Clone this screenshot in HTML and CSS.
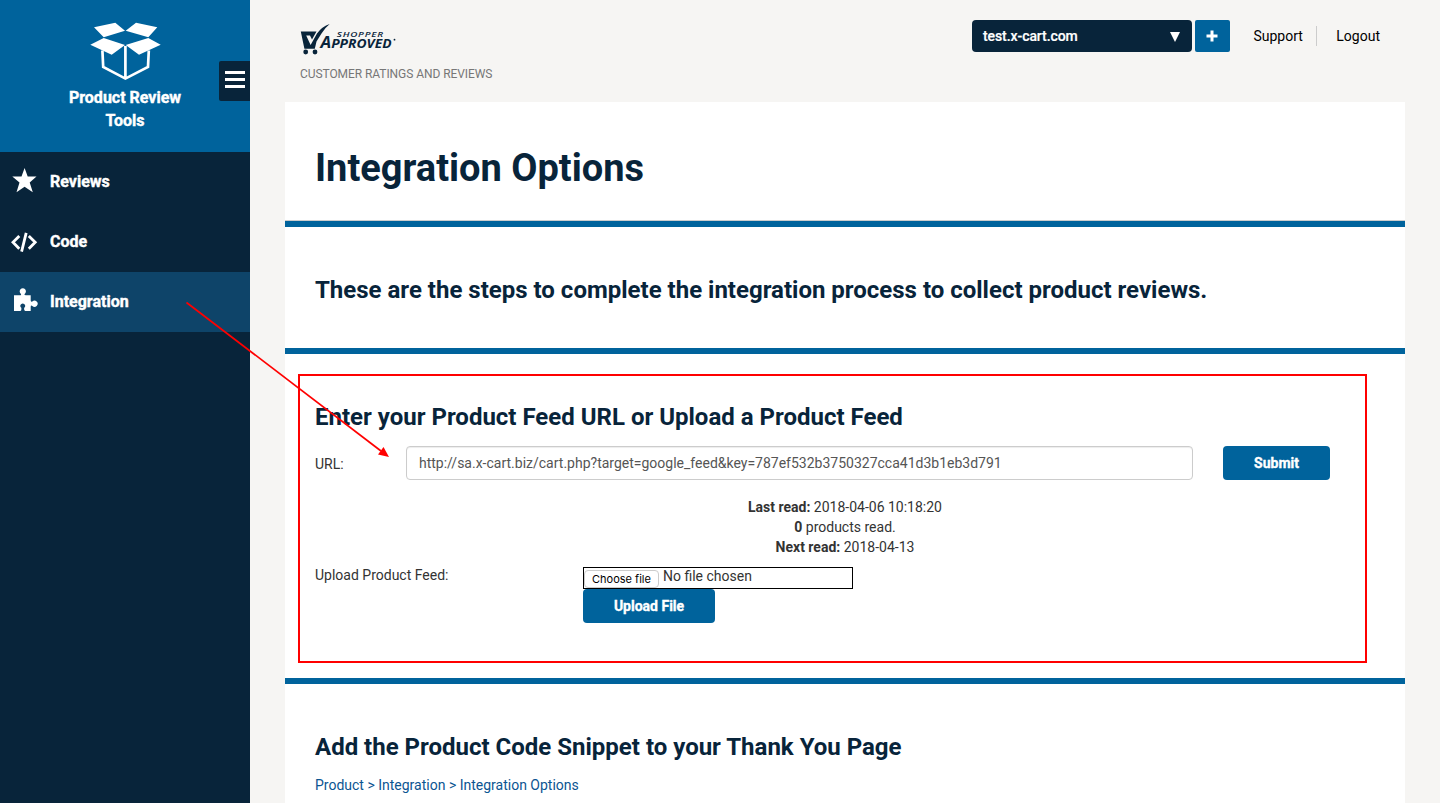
FILE: index.html
```html
<!DOCTYPE html>
<html lang="en">
<head>
<meta charset="utf-8">
<title>Integration Options</title>
<link rel="stylesheet" href="styles.css">
</head>
<body>
<div class="app">
  <aside class="sidebar">
    <div class="brand">
      <svg class="brand-icon" width="72" height="60" viewBox="0 0 72 60" fill="#fff">
        <path d="M5 5.300L26.300.700 36 8.700 14.700 15.300zM68.300 5.300L47 .700 36.700 8.700 59.300 15.300zM14.700 16L36 23 22.700 32.700 1.300 22.700zM59.300 16L36.700 23 50 32.700 71.700 22.700z"/>
        <path d="M13.400 28.500L14.200 45 36.400 56.600 59 45 59.800 28.500M36.400 24V57" fill="none" stroke="#fff" stroke-width="2.700"/>
      </svg>
      <div class="brand-name">Product Review<br>Tools</div>
      <button class="toggle" aria-label="Menu"><i></i><i></i><i></i></button>
    </div>
    <nav class="menu">
      <a class="item"><svg width="28" height="26" viewBox="0 0 28 26"><path fill="#fff" d="M13.600 0L16.700 8.600H25.500L18.700 14.500 21.800 24.200 13.600 18.700 5.500 24.200 8.500 14.500 1.300 8.600H10.500z"/></svg><span>Reviews</span></a>
      <a class="item"><svg width="28" height="26" viewBox="0 0 28 26"><path fill="none" stroke="#fff" stroke-width="2.800" d="M8.300 8L2 14.300 8.300 20.800M17.800 8L24.200 14.300 17.800 20.800M15.200 4.800L10.600 23.600"/></svg><span>Code</span></a>
      <a class="item active"><svg width="28" height="26" viewBox="0 0 28 26"><path fill="#fff" d="M3 7.300H8.500Q10.500 7.300 10 5.900A3.100 3.100 0 1 1 13.600 5.900Q13 7.300 15 7.300H19.700V12.300Q19.700 14.300 21.300 13.500A3.100 3.100 0 1 1 21.300 17.900Q19.700 17 19.700 19V23H14.200Q12.700 22.500 13.200 19.700A2.300 2.300 0 1 0 10.300 19.700Q10.800 22.500 9.200 23H3z"/></svg><span>Integration</span></a>
    </nav>
  </aside>
  <main class="main">
    <header class="topbar">
      <div class="company">
        <svg class="logo" width="98" height="34" viewBox="0 0 98 34">
          <path fill="#08243a" d="M.800 7.500H16.500L14.500 11 12 15.500 10 11.500H6.200L10.600 21 17 9.500Q22 2.500 29.700 0 25.500 3.300 21.500 9.500L16.500 17.500 14.800 24.800H4.400Z"/>
          <g fill="#08243a">
            <circle cx="5.700" cy="28" r="2.400"/><circle cx="15" cy="28" r="2.400"/>
            <text class="logo-small" x="36.800" y="12.700" textLength="47" lengthAdjust="spacingAndGlyphs">SHOPPER</text>
            <text class="logo-big" x="20.500" y="23.700" textLength="71" lengthAdjust="spacingAndGlyphs"><tspan class="logo-a">A</tspan>PPROVED</text>
            <circle cx="94.500" cy="15.700" r=".900"/>
          </g>
        </svg>
        <div class="tagline">CUSTOMER RATINGS AND REVIEWS</div>
      </div>
      <div class="tools">
        <div class="site"><span>test.x-cart.com</span><svg width="10" height="10"><path d="M0 0h10L5 10z" fill="#fff"/></svg></div>
        <button class="add" aria-label="Add"><svg width="12" height="12"><path d="M6 .5v11M.5 6h11" stroke="#fff" stroke-width="3"/></svg></button>
        <a class="support">Support</a>
        <a class="logout">Logout</a>
      </div>
    </header>
    <div class="panel">
      <section class="title"><h1>Integration Options</h1></section>
      <section class="intro"><h2>These are the steps to complete the integration process to collect product reviews.</h2></section>
      <section class="feed">
        <h2>Enter your Product Feed URL or Upload a Product Feed</h2>
        <div class="url-row">
          <label>URL:</label>
          <div class="input"><span>http://sa.x-cart.biz/cart.php?target=google_feed&amp;key=787ef532b3750327cca41d3b1eb3d791</span></div>
          <button class="btn submit"><span>Submit</span></button>
        </div>
        <div class="status">
          <div><b>Last read:</b> 2018-04-06 10:18:20</div>
          <div><b>0</b> products read.</div>
          <div><b>Next read:</b> 2018-04-13</div>
        </div>
        <div class="upload-row">
          <label>Upload Product Feed:</label>
          <div>
            <div class="file"><span class="choose">Choose file</span><span class="none">No file chosen</span></div>
            <button class="btn upload"><span>Upload File</span></button>
          </div>
        </div>
      </section>
      <section class="snippet">
        <h2>Add the Product Code Snippet to your Thank You Page</h2>
        <div class="crumbs">Product &gt; Integration &gt; Integration Options</div>
      </section>
    </div>
  </main>
  <svg class="annotation" width="1440" height="803">
    <rect x="299" y="375" width="1067" height="287" fill="none" stroke="#f00" stroke-width="2"/>
    <path d="M186.500 302.500L381 451" stroke="#f00" stroke-width="1.700"/>
    <path d="M389 457l-11-2.500 5.500-7.500z" fill="#f00"/>
  </svg>
</div>
</body>
</html>
```
FILE: styles.css
```css
* { box-sizing: border-box; }
body { margin: 0; font: 14px/20px Roboto, sans-serif; color: #333; }
h1, h2 { margin: 0; color: #08243a; font-weight: 700; white-space: nowrap; }
button { border: 0; padding: 0; font: inherit; }
svg { display: block; flex: none; }
.app { position: relative; display: flex; width: 1440px; height: 803px; overflow: hidden; background: #f6f5f3; }
.sidebar { width: 250px; background: #08243a; color: #fff; }
.brand { position: relative; height: 152px; padding-top: 22px; background: #00639c; text-align: center; }
.brand-icon { margin: 0 auto; }
.brand-name { margin-top: 4px; font-size: 16px; line-height: 23px; font-weight: 700; -webkit-text-stroke: .4px; }
.toggle { position: absolute; right: 0; top: 61px; display: flex; flex-direction: column; gap: 4px; width: 31px; height: 40px; padding: 10px 5px 0 6px; background: #08243a; border-radius: 2px 0 0 2px; }
.toggle i { flex: none; height: 3px; background: #fff; }
.item { display: flex; align-items: center; height: 60px; padding: 0 11px; gap: 11px; font-size: 16px; font-weight: 700; -webkit-text-stroke: .4px; }
.item svg { margin-top: -2px; }
.item.active { background: #0e4469; }
.main { width: 1190px; padding: 0 35px; }
.topbar { display: flex; justify-content: space-between; height: 102px; }
.company { padding: 24px 0 0 15px; }
.logo-small { font: italic 600 7.500px/8px "Open Sans", sans-serif; letter-spacing: .6px; }
.logo-big { font: italic 700 13px/13px "Open Sans", sans-serif; }
.logo-a { font-size: 16px; }
.tagline { margin-top: 6px; font-size: 12px; letter-spacing: -.07px; color: #777; white-space: nowrap; }
.tools { display: flex; padding: 20px 25px 0 0; color: #000; }
.site { display: flex; align-items: center; justify-content: space-between; width: 220px; height: 32px; padding: 0 12px 0 11px; border-radius: 4px; background: #08243a; color: #fff; font-weight: 500; letter-spacing: -.07px; -webkit-text-stroke: .2px; }
.site svg { margin-top: 2px; }
.add { display: grid; place-items: center; width: 35px; height: 32px; margin-left: 3px; border-radius: 2px; background: #00639c; }
.support { height: 20px; margin: 6px 0 0 23.500px; padding-right: 13.500px; border-right: 1px solid #ccc; }
.logout { margin: 6px 0 0 19px; }
.panel { width: 1120px; height: 701px; background: #fff; }
.panel section { padding-left: 30px; border-bottom: 6px solid #00639c; }
.panel .title { height: 125px; padding-top: 44px; box-shadow: inset 0 -1px #ccc; }
h1 { font-size: 38px; line-height: 44px; }
h2 { font-size: 24px; line-height: 28px; }
.panel .intro { height: 127px; padding-top: 49px; }
.panel .feed { height: 330px; padding-top: 49px; }
.url-row { display: flex; align-items: center; margin-top: 15px; }
.url-row label { width: 91px; padding-top: 2px; }
.input { width: 787px; height: 34px; padding: 6px 12px; border: 1px solid #ccc; border-radius: 4px; box-shadow: inset 0 1px 1px rgba(0,0,0,.075); color: #555; }
.btn { height: 34px; border-radius: 4px; background: #00639c; color: #fff; font-weight: 700; -webkit-text-stroke: .35px; }
.submit { width: 107px; margin-left: 30px; }
.status { width: 1060px; margin-top: 17px; text-align: center; }
.upload-row { display: flex; margin-top: 10px; }
.upload-row label { width: 268px; margin-top: -2px; }
.file { display: flex; width: 270px; height: 22px; border: 1px solid #000; }
.choose { height: 18px; margin-top: 2px; width: 75px; border: 1px solid #ccc; border-radius: 4px; font: 11px/17px Inter, sans-serif; color: #000; text-align: center; white-space: nowrap; }
.none { margin-left: 4px; line-height: 17px; }
.upload { display: block; width: 132px; }
.panel .snippet { border: 0; padding-top: 49px; }
.crumbs { margin-top: 14px; color: #0b5592; }
.annotation { position: absolute; left: 0; top: 0; pointer-events: none; }
```
